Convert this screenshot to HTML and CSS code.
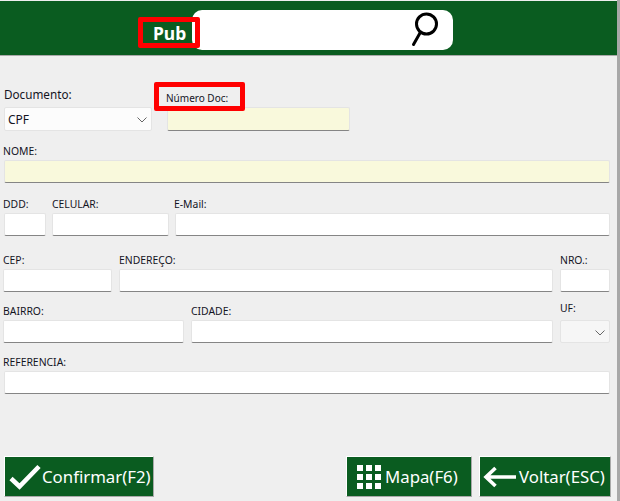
FILE: index.html
```html
<!DOCTYPE html>
<html lang="pt">
<head>
<meta charset="utf-8">
<title>Cadastro</title>
<link rel="stylesheet" href="styles.css">
</head>
<body>
<div class="window">
  <header class="topbar">
    <div class="pub-box"><span class="pub">Pub</span></div>
    <div class="search">
      <svg class="search-icon" width="30" height="36" viewBox="0 0 30 36" aria-hidden="true">
        <circle cx="15.500" cy="12" r="10" fill="none" stroke="#000" stroke-width="3"/>
        <path d="M9 21 L2.500 32.500" fill="none" stroke="#000" stroke-width="3" stroke-linecap="round"/>
      </svg>
    </div>
  </header>

  <main class="form">
    <div class="row row-doc">
      <div class="field">
        <label class="label label-doc">Documento:</label>
        <div class="select">CPF
          <svg class="chevron" width="10" height="6" viewBox="0 0 10 6" aria-hidden="true"><path d="M.5.5 5 5 9.500.5" fill="none" stroke="#666" stroke-width="1"/></svg>
        </div>
      </div>
      <div class="field field-num">
        <label class="label-num">Número Doc:</label>
        <input class="input yellow" type="text">
      </div>
    </div>

    <div class="row row-nome">
      <div class="field">
        <label class="label">NOME:</label>
        <input class="input yellow" type="text">
      </div>
    </div>

    <div class="row row-contact">
      <div class="field"><label class="label">DDD:</label><input class="input" type="text"></div>
      <div class="field"><label class="label">CELULAR:</label><input class="input" type="text"></div>
      <div class="field"><label class="label">E-Mail:</label><input class="input" type="text"></div>
    </div>

    <div class="row row-address">
      <div class="field"><label class="label">CEP:</label><input class="input" type="text"></div>
      <div class="field"><label class="label">ENDEREÇO:</label><input class="input" type="text"></div>
      <div class="field"><label class="label">NRO.:</label><input class="input" type="text"></div>
    </div>

    <div class="row row-city">
      <div class="field"><label class="label">BAIRRO:</label><input class="input" type="text"></div>
      <div class="field"><label class="label">CIDADE:</label><input class="input" type="text"></div>
      <div class="field">
        <label class="label label-uf">UF:</label>
        <div class="select select-uf">
          <svg class="chevron" width="10" height="6" viewBox="0 0 10 6" aria-hidden="true"><path d="M.5.5 5 5 9.500.5" fill="none" stroke="#666" stroke-width="1"/></svg>
        </div>
      </div>
    </div>

    <div class="row row-ref">
      <div class="field"><label class="label">REFERENCIA:</label><input class="input" type="text"></div>
    </div>
  </main>

  <footer class="actions">
    <button class="btn btn-confirm" type="button">
      <svg width="34" height="26" viewBox="0 0 34 26" aria-hidden="true"><path d="M3 14.500 11.500 22.500 31 2.500" fill="none" stroke="#fff" stroke-width="4.600"/></svg>
      <span>Confirmar(F2)</span>
    </button>
    <button class="btn btn-map" type="button">
      <svg width="25" height="24" viewBox="0 0 25 24" aria-hidden="true"><path fill="#fff" d="M0 0h6v6H0zM9 0h6v6H9zM18 0h6v6h-6zM0 9h6v6H0zM9 9h6v6H9zM18 9h6v6h-6zM0 18h6v6H0zM9 18h6v6H9zM18 18h6v6h-6z"/></svg>
      <span>Mapa(F6)</span>
    </button>
    <button class="btn btn-back" type="button">
      <svg width="34" height="22" viewBox="0 0 34 22" aria-hidden="true"><path d="M33 11H4M12.500 2 3 11l9.500 9" fill="none" stroke="#fff" stroke-width="3.600"/></svg>
      <span>Voltar(ESC)</span>
    </button>
  </footer>
</div>
</body>
</html>
```

FILE: styles.css
```css
* { box-sizing: border-box; }

html, body {
  margin: 0;
  height: 100%;
  overflow: hidden;
}

body {
  background: #efefef;
  font-family: "Noto Sans", "Open Sans", sans-serif;
  color: #14141f;
}

.window {
  width: 620px;
  height: 501px;
  border-right: 3px solid #a8a8a8;
  padding-top: 1px;
  background: #efefef;
}

.topbar {
  display: flex;
  align-items: center;
  height: 55px;
  padding-top: 4px;
  padding-left: 138px;
  background: #0a5c20;
  border-bottom: 1px solid #a9a9a9;
}

.pub-box {
  display: flex;
  align-items: center;
  width: 62px;
  height: 31px;
  margin-right: -8px;
  margin-top: 5px;
  padding-left: 11px;
  border: 5px solid #ff0000;
  border-radius: 2px;
  position: relative;
  z-index: 1;
}

.pub {
  margin-left: -1px;
  color: #fff;
  font-size: 17.500px;
  font-weight: 700;
  line-height: 20px;
}

.search {
  display: flex;
  justify-content: flex-end;
  align-items: center;
  width: 261px;
  height: 40px;
  padding-right: 12px;
  background: #fff;
  border-radius: 10px;
}

.search-icon { display: block; }

.form { padding-right: 7px; }

.row { display: grid; column-gap: 7px; }

.field { position: relative; min-width: 0; }

.label {
  display: block;
  height: 16px;
  font-size: 10.400px;
  line-height: 14px;
  white-space: nowrap;
}

.input {
  display: block;
  width: 100%;
  height: 23px;
  margin: 0;
  padding: 0 4px;
  background: #fff;
  border: 1px solid #e4e4e4;
  border-bottom: 1px solid #858585;
  border-radius: 2px;
  outline: none;
}

.yellow { background: #f9f9dc; }

.select {
  position: relative;
  height: 24px;
  padding-left: 3px;
  background: #fcfcfc;
  border: 1px solid #e4e4e4;
  border-radius: 2px;
  font-size: 12px;
  line-height: 24px;
}

.chevron { position: absolute; right: 4px; top: 9px; }

.row-doc {
  grid-template-columns: 148px 183px;
  column-gap: 15px;
  margin-top: 27px;
  padding-left: 4px;
}

.label-doc {
  height: 24px;
  padding-top: 3px;
  font-size: 11.700px;
  line-height: 16px;
}

.field-num { padding-top: 24px; }

.field-num .input { height: 24px; }

.label-num {
  position: absolute;
  left: -13px;
  top: -1px;
  width: 91px;
  height: 29px;
  padding: 4px 0 0 7px;
  border: 5px solid #ff0000;
  border-radius: 2px;
  font-size: 10px;
  line-height: 14px;
  white-space: nowrap;
}

.row-nome {
  margin-top: 13px;
  padding-left: 4px;
}

.row-nome .label { margin-left: -1px; }

.row-contact {
  grid-template-columns: 42px 117px 1fr;
  column-gap: 6px;
  margin-top: 14px;
  padding-left: 4px;
}

.row-contact .field:first-child .label,
.row-contact .field:last-child .label { margin-left: -1px; }

.row-address {
  grid-template-columns: 109px 1fr 50px;
  margin-top: 17px;
  padding-left: 3px;
}

.row-city {
  grid-template-columns: 181px 1fr 50px;
  margin-top: 12px;
  padding-left: 3px;
}

.label-uf { margin-top: -3px; height: 19px; }

.select-uf { height: 23px; background: #f6f6f6; }

.row-ref {
  margin-top: 12px;
  padding-left: 4px;
}

.row-ref .label { margin-left: -1px; }

.actions {
  display: flex;
  margin-top: 62px;
  padding-left: 4px;
}

.btn {
  display: flex;
  align-items: center;
  height: 41px;
  margin: 0;
  padding: 0 0 0 3px;
  background: #0a5c20;
  border: 1px solid #a9a9a9;
  border-top-color: #fff;
  border-left-color: #fff;
  border-radius: 0;
  color: #fff;
  font-family: "Noto Sans", "Open Sans", sans-serif;
  font-size: 16.800px;
  white-space: nowrap;
}

.btn-confirm { width: 150px; gap: 0; }

.btn-map { width: 126px; margin-left: auto; padding-left: 10px; gap: 3px; }

.btn-back { width: 132px; margin-left: 7px; margin-right: 6px; gap: 2px; }
```
